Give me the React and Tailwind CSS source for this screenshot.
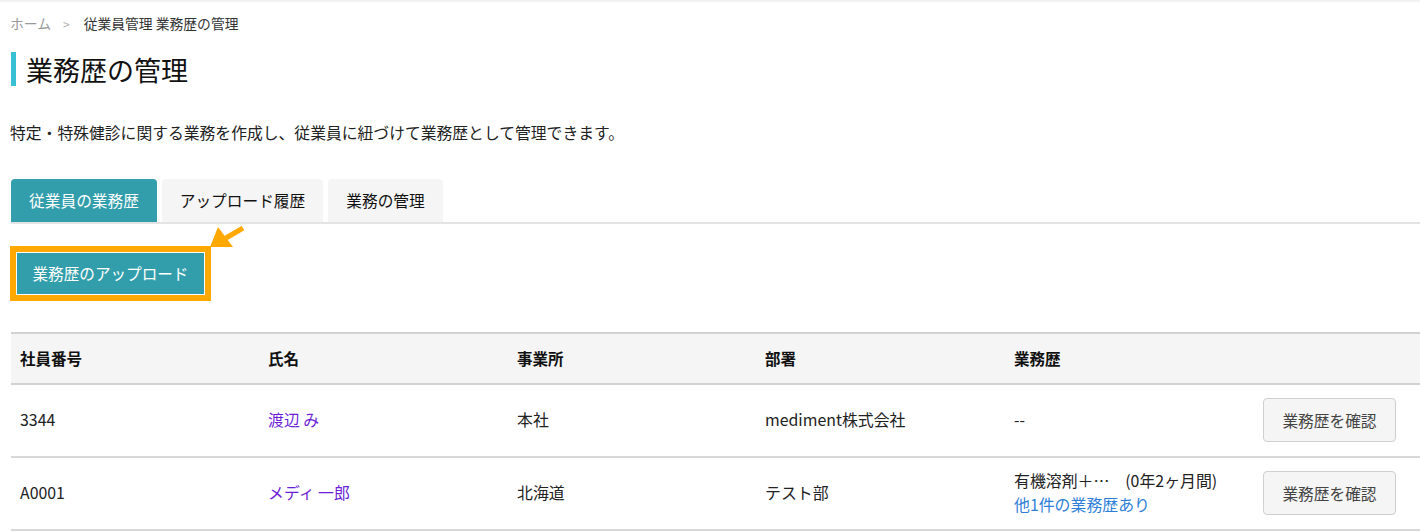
import React from "react";

const rows = [
  { no: "3344", name: "渡辺 み", office: "本社", dept: "mediment株式会社", history: null },
  {
    no: "A0001",
    name: "メディ 一郎",
    office: "北海道",
    dept: "テスト部",
    history: { main: "有機溶剤＋…　(0年2ヶ月間)", more: "他1件の業務歴あり" },
  },
];

export default function App() {
  return (
    <div
      className="min-h-screen bg-white text-[#222]"
      style={{ fontFamily: '"Noto Sans CJK JP", "Noto Sans", sans-serif' }}
    >
      <div className="h-[3px] bg-gradient-to-b from-[#ececec] to-white" />

      <div className="pl-[10px]">
        {/* breadcrumb */}
        <div className="flex items-center h-[18px] mt-[12px] text-[13.8px] leading-none">
          <span className="text-[#999]">ホーム</span>
          <span className="text-[#b0b0b0] ml-[12px] mr-[14px] text-[12px]">&gt;</span>
          <span className="text-[#333]">従業員管理 業務歴の管理</span>
        </div>

        {/* title */}
        <div className="flex items-center mt-[19px] h-[34px]">
          <div className="w-[5px] h-[34px] bg-[#37c0d6] ml-px" />
          <h1 className="ml-[10px] text-[27px] leading-none text-[#111]">業務歴の管理</h1>
        </div>

        <p className="mt-[39px] text-[15.8px] leading-none text-[#222]">
          特定・特殊健診に関する業務を作成し、従業員に紐づけて業務歴として管理できます。
        </p>

        {/* tabs */}
        <div className="mt-[38px] ml-px flex items-end gap-[5px] border-b-2 border-[#e4e4e4] h-[45px]">
          <div className="w-[146px] h-[43px] flex items-center justify-center rounded-t-[4px] bg-[#329eab] text-white text-[15.7px]">
            従業員の業務歴
          </div>
          <div className="w-[161px] h-[43px] flex items-center justify-center rounded-t-[4px] bg-[#f5f5f5] text-[#111] text-[15.7px]">
            アップロード履歴
          </div>
          <div className="w-[115px] h-[43px] flex items-center justify-center rounded-t-[4px] bg-[#f5f5f5] text-[#111] text-[15.7px]">
            業務の管理
          </div>
        </div>

        {/* upload button with highlight */}
        <div className="relative mt-[22px] h-[55px]">
          <div className="inline-flex border-[6px] border-[#ffa900] w-[201px] h-[55px]">
            <button className="m-[1px] flex-1 bg-[#329eab] text-white text-[15.6px] flex items-center justify-center">
              業務歴のアップロード
            </button>
          </div>
          <svg
            className="absolute left-[192px] top-[-20px]"
            width="56"
            height="36"
            viewBox="0 0 56 36"
          >
            <line x1="41" y1="2" x2="24" y2="12" stroke="#ffa900" strokeWidth="5" />
            <polygon points="8,21 16,1 31,21" fill="#ffa900" />
          </svg>
        </div>

        {/* table */}
        <div className="mt-[31px] ml-px">
          <div className="grid grid-cols-[249px_249px_249px_249px_249px_1fr] h-[53px] items-center bg-[#f5f5f5] border-t-2 border-b-2 border-[#d2d2d2] text-[15.5px] font-bold text-[#111]">
            <div className="pl-[9px]">社員番号</div>
            <div className="pl-[8px]">氏名</div>
            <div className="pl-[8px]">事業所</div>
            <div className="pl-[7px]">部署</div>
            <div className="pl-[7px]">業務歴</div>
            <div />
          </div>
          {rows.map((r) => (
            <div
              key={r.no}
              className="grid grid-cols-[249px_249px_249px_249px_249px_1fr] h-[73px] items-center border-b-2 border-[#d8d8d8] text-[15.9px] text-[#222]"
            >
              <div className="pl-[9px]">{r.no}</div>
              <div className="pl-[8px] text-[#6d1fd6]">{r.name}</div>
              <div className="pl-[8px]">{r.office}</div>
              <div className="pl-[7px]">{r.dept}</div>
              <div className="pl-[7px] leading-[24px]">
                {r.history ? (
                  <>
                    <div className="whitespace-pre">{r.history.main}</div>
                    <div className="text-[#2f7fd8]">{r.history.more}</div>
                  </>
                ) : (
                  "--"
                )}
              </div>
              <div className="pl-[7px]">
                <button className="w-[133px] h-[44px] rounded-[4px] bg-[#f5f5f5] border border-[#cfcfcf] text-[15.7px] text-[#444]">
                  業務歴を確認
                </button>
              </div>
            </div>
          ))}
        </div>
      </div>
    </div>
  );
}
